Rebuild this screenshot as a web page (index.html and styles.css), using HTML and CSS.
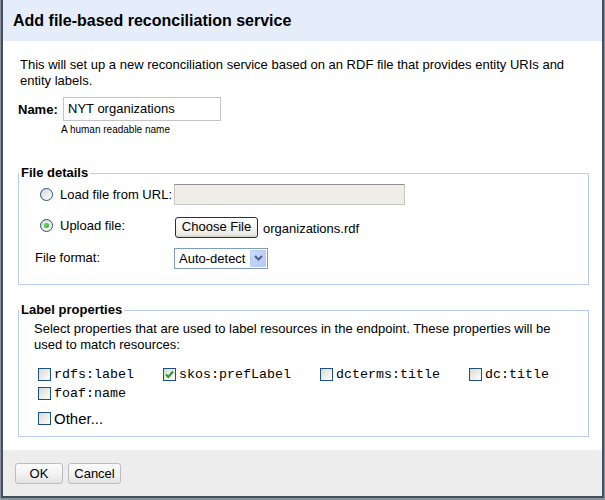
FILE: index.html
```html
<!DOCTYPE html>
<html>
<head>
<meta charset="utf-8">
<link rel="stylesheet" href="styles.css">
</head>
<body>
<div class="dialog">
  <div class="dialog-header">Add file-based reconciliation service</div>
  <div class="dialog-body">
    <p class="intro">This will set up a new reconciliation service based on an RDF file that provides entity URIs and entity labels.</p>
    <div class="name-row">
      <span class="name-label">Name:</span>
      <span class="text-input">NYT organizations</span>
    </div>
    <div class="hint">A human readable name</div>

    <fieldset class="group group-file">
      <legend>File details</legend>
      <div class="file-grid">
        <div class="opt"><span class="radio"></span><span>Load file from URL:</span></div>
        <div><span class="disabled-input"></span></div>
        <div class="opt"><span class="radio checked"><span class="dot"></span></span><span>Upload file:</span></div>
        <div class="upload"><span class="file-btn">Choose File</span><span class="file-name">organizations.rdf</span></div>
        <div class="opt plain">File format:</div>
        <div><span class="select"><span class="select-text">Auto-detect</span><span class="select-arrow"><svg width="9" height="6" viewBox="0 0 9 6"><path d="M1 1 L4.5 4.5 L8 1" fill="none" stroke="#4d6185" stroke-width="2"/></svg></span></span></div>
      </div>
    </fieldset>

    <fieldset class="group group-label">
      <legend>Label properties</legend>
      <div class="label-inner">
        <p class="desc">Select properties that are used to label resources in the endpoint. These properties will be used to match resources:</p>
        <div class="props">
          <label class="prop"><span class="check"></span><span class="mono">rdfs:label</span></label>
          <label class="prop"><span class="check checked"><svg width="11" height="11" viewBox="0 0 11 11"><path d="M2 5.5 L4.3 8 L9 2.5" fill="none" stroke="#21a121" stroke-width="2"/></svg></span><span class="mono">skos:prefLabel</span></label>
          <label class="prop"><span class="check"></span><span class="mono">dcterms:title</span></label>
          <label class="prop"><span class="check"></span><span class="mono">dc:title</span></label>
          <label class="prop"><span class="check"></span><span class="mono">foaf:name</span></label>
        </div>
        <label class="other"><span class="check"></span><span>Other...</span></label>
      </div>
    </fieldset>
  </div>
  <div class="dialog-footer">
    <span class="btn btn-ok">OK</span>
    <span class="btn btn-cancel">Cancel</span>
  </div>
</div>
</body>
</html>
```

FILE: styles.css
```css
html, body {
  margin: 0;
  padding: 0;
}
body {
  background: #8e949c;
  font-family: "Liberation Sans", Arial, sans-serif;
  font-size: 13px;
  color: #000;
  width: 605px;
  height: 500px;
  overflow: hidden;
}
.dialog {
  margin-left: 1px;
  width: 599px;
  height: 496px;
  background: #fff;
  border: 2px solid #434f62;
  border-top: 0;
  display: flex;
  flex-direction: column;
}
.dialog-header {
  height: 41px;
  box-sizing: border-box;
  background: #e5edfb;
  padding: 11px 0 0 10px;
  font-size: 16px;
  font-weight: bold;
  line-height: 20px;
  color: #000;
}
.dialog-body {
  flex: 1;
  padding: 16px 13px 0 15px;
}
.intro {
  margin: 0;
  padding-left: 2px;
  line-height: 16px;
}
.name-row {
  margin-top: 8px;
  display: flex;
  align-items: center;
  height: 24px;
}
.name-label {
  font-weight: bold;
  width: 45px;
}
.text-input {
  box-sizing: border-box;
  width: 158px;
  height: 24px;
  border: 1px solid #c4c4c4;
  padding: 0 4px;
  line-height: 22px;
}
.hint {
  margin-left: 43px;
  font-size: 10px;
  line-height: 14px;
  margin-top: 2px;
}
.group {
  margin: 28px 0 0 0;
  padding: 0;
  border: 1px solid #b9cdf4;
  min-width: 0;
}
.group legend {
  padding: 0 2px;
  font-weight: bold;
  font-size: 13px;
  line-height: 16px;
}
.file-grid {
  display: grid;
  grid-template-columns: 139px 1fr;
  grid-auto-rows: 31px;
  align-items: center;
  margin-top: -2px;
  padding: 0 0 12px 16px;
}
.opt {
  display: flex;
  align-items: center;
}
.radio {
  box-sizing: border-box;
  width: 13px;
  height: 13px;
  border: 1px solid #1c5180;
  border-radius: 50%;
  background: linear-gradient(135deg, #d8d8d2, #ffffff);
  margin: 0 7px 0 5px;
  display: flex;
  align-items: center;
  justify-content: center;
}
.radio .dot {
  width: 5px;
  height: 5px;
  border-radius: 50%;
  background: radial-gradient(circle at 40% 40%, #6fdc5e, #21a121);
}
.disabled-input {
  display: block;
  box-sizing: border-box;
  width: 231px;
  height: 21px;
  background: #eeede6;
  border: 1px solid #c8c8c2;
  border-top-color: #8e8e8e;
}
.upload {
  display: flex;
  align-items: center;
  padding-top: 3px;
}
.file-btn {
  box-sizing: border-box;
  display: inline-block;
  width: 83px;
  height: 21px;
  border: 1px solid #003c74;
  border-radius: 3px;
  background: linear-gradient(#ffffff, #ecebe6 85%, #d6d0c5);
  text-align: center;
  line-height: 18px;
  font-size: 13px;
  margin-left: 1px;
}
.file-name {
  margin-left: 5px;
  padding-top: 3px;
}
.plain {
  padding-top: 2px;
}
.select {
  box-sizing: border-box;
  display: flex;
  align-items: center;
  width: 94px;
  height: 21px;
  border: 1px solid #7f9db9;
  margin-top: 3px;
}
.select-text {
  flex: 1;
  padding-left: 4px;
}
.select-arrow {
  box-sizing: border-box;
  width: 16px;
  height: 17px;
  margin-right: 1px;
  background: linear-gradient(135deg, #c9dafd, #b4c8f6);
  border: 1px solid #b9ccf3;
  border-radius: 1px;
  display: flex;
  align-items: center;
  justify-content: center;
}
.group-label {
  margin-top: 17px;
}
.label-inner {
  padding: 3px 30px 8px 15px;
}
.desc {
  margin: 0;
  line-height: 16px;
}
.props {
  margin-top: 12px;
  display: flex;
  flex-wrap: wrap;
  column-gap: 13px;
  width: 540px;
}
.prop, .other {
  display: flex;
  align-items: center;
  height: 19px;
}
.prop {
  margin-right: 12px;
}
.check {
  box-sizing: border-box;
  width: 13px;
  height: 13px;
  border: 1px solid #1c5180;
  background: linear-gradient(135deg, #d8d8d2, #ffffff);
  margin: 0 3px 0 4px;
  display: flex;
  align-items: center;
  justify-content: center;
}
.mono {
  font-family: "Liberation Mono", "Courier New", monospace;
  font-size: 13.33px;
}
.other {
  margin-top: 5px;
  height: 20px;
  font-size: 15px;
}
.dialog-footer {
  height: 46px;
  box-sizing: border-box;
  background: #ededed;
  padding: 13px 0 0 12px;
  display: flex;
  align-items: flex-start;
  gap: 5px;
}
.btn {
  box-sizing: border-box;
  height: 21px;
  border: 1px solid #bdbdbd;
  border-radius: 3px;
  background: linear-gradient(#fbfbfb, #f1f1f1 60%, #e2e2e2);
  text-align: center;
  line-height: 19px;
  font-size: 13px;
}
.btn-ok {
  width: 48px;
}
.btn-cancel {
  width: 53px;
}
```
